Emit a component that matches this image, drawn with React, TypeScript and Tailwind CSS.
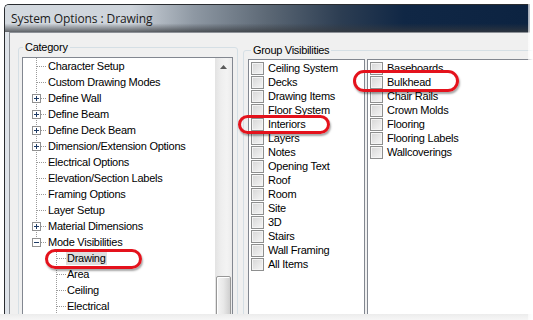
import React from "react";

const ui = { fontFamily: '"Liberation Sans", Arial, sans-serif' };

type Node = { label: string; box?: "plus" | "minus"; level: 0 | 1; last?: boolean; selected?: boolean };

const tree: Node[] = [
  { label: "Character Setup", level: 0 },
  { label: "Custom Drawing Modes", level: 0 },
  { label: "Define Wall", level: 0, box: "plus" },
  { label: "Define Beam", level: 0, box: "plus" },
  { label: "Define Deck Beam", level: 0, box: "plus" },
  { label: "Dimension/Extension Options", level: 0, box: "plus" },
  { label: "Electrical Options", level: 0 },
  { label: "Elevation/Section Labels", level: 0 },
  { label: "Framing Options", level: 0 },
  { label: "Layer Setup", level: 0 },
  { label: "Material Dimensions", level: 0, box: "plus" },
  { label: "Mode Visibilities", level: 0, box: "minus", last: true },
  { label: "Drawing", level: 1, selected: true },
  { label: "Area", level: 1 },
  { label: "Ceiling", level: 1 },
  { label: "Electrical", level: 1 },
];

const groupsA = [
  "Ceiling System",
  "Decks",
  "Drawing Items",
  "Floor System",
  "Interiors",
  "Layers",
  "Notes",
  "Opening Text",
  "Roof",
  "Room",
  "Site",
  "3D",
  "Stairs",
  "Wall Framing",
  "All Items",
];

const groupsB = ["Baseboards", "Bulkhead", "Chair Rails", "Crown Molds", "Flooring", "Flooring Labels", "Wallcoverings"];

function TreeLines({ node }: { node: Node }) {
  const dot = { stroke: "#9a9a9a", strokeDasharray: "1 1", shapeRendering: "crispEdges" as const };
  if (node.level === 1) {
    return (
      <svg width="44" height="16" className="shrink-0">
        <line x1="33.5" y1="0" x2="33.5" y2="16" {...dot} />
        <line x1="34" y1="8.5" x2="43" y2="8.5" {...dot} />
      </svg>
    );
  }
  return (
    <svg width="25" height="16" className="shrink-0">
      <line x1="13.5" y1="0" x2="13.5" y2={node.last ? 8 : 16} {...dot} />
      <line x1={node.box ? 18 : 14} y1="8.5" x2="23" y2="8.5" {...dot} />
      {node.box && (
        <g shapeRendering="crispEdges">
          <rect x="9.5" y="4.5" width="8" height="8" fill="#fff" stroke="#919191" />
          <line x1="11" y1="8.5" x2="16" y2="8.5" stroke="#1f3c66" />
          {node.box === "plus" && <line x1="13.5" y1="6" x2="13.5" y2="11" stroke="#1f3c66" />}
        </g>
      )}
    </svg>
  );
}

function Check() {
  return (
    <span className="block h-[13px] w-[13px] shrink-0 border border-[#8e8f8f] bg-[linear-gradient(135deg,#d6d6d6,#f6f6f6)] shadow-[inset_0_0_0_1px_#f4f4f4]" />
  );
}

function Oval({ cls }: { cls: string }) {
  return (
    <div
      className={
        "absolute rounded-full border-[3px] border-[#e4121c] shadow-[1px_2px_2px_rgba(0,0,0,0.35)] " + cls
      }
    />
  );
}

export default function App() {
  return (
    <div className="relative h-[320px] w-[533px] overflow-hidden bg-white text-[11px] text-black" style={ui}>
      <div className="ml-[4px] mt-[4px] flex h-[330px] w-[526px] flex-col rounded-tl-[5px] border-l border-t border-[#2a2d31] bg-[#dfe4ea]">
        {/* title bar */}
        <div className="flex h-[27px] shrink-0 items-center rounded-tl-[4px] bg-[linear-gradient(180deg,rgba(0,0,0,0)_68%,rgba(55,58,62,0.75)_100%),linear-gradient(90deg,#d4dae0_0%,#cdd3da_24%,#8e98a3_36%,#5c6875_50%,#2c3d52_64%,#102745_76%,#0c2341_100%)] pl-[6px]">
          <span className="text-[12px] tracking-[-0.1px] text-[#1a1a1a]" style={{ fontFamily: '"Open Sans", "Noto Sans", sans-serif' }}>
            System Options : Drawing
          </span>
        </div>

        {/* client area */}
        <div className="ml-[4px] flex flex-1 items-start border-l border-t border-[#8d9197] bg-[#f0f0f0] pl-[8px]">
          {/* Category */}
          <fieldset className="mt-[7px] h-[300px] w-[220px] shrink-0 rounded-[3px] border border-[#d5dfe5] pl-[3px] pr-[4px] pt-[3px]">
            <legend className="ml-[1px] px-[2px] leading-[14px] tracking-[-0.25px]">Category</legend>
            <div className="flex h-[280px] border border-[#828790] bg-white">
              <div className="flex flex-1 flex-col overflow-hidden tracking-[-0.25px]">
                {tree.map((n) => (
                  <div key={n.label} className="flex h-[16px] shrink-0 items-center leading-[16px]">
                    <TreeLines node={n} />
                    <span
                      className={
                        "whitespace-nowrap " +
                        (n.selected ? "ml-[-1px] bg-[#dedede] px-[1px] leading-[14px]" : "ml-[0px]")
                      }
                    >
                      {n.label}
                    </span>
                  </div>
                ))}
              </div>
              {/* scrollbar */}
              <div className="flex w-[17px] shrink-0 flex-col bg-[linear-gradient(90deg,#e3e3e3,#eeeeee_35%,#f3f3f3_70%,#ebebeb)]">
                <div className="flex h-[17px] shrink-0 items-center justify-center">
                  <svg width="7" height="4" viewBox="0 0 7 4">
                    <path d="M0 4 L3.5 0 L7 4 Z" fill="#5a5a5a" />
                  </svg>
                </div>
                <div className="h-[201px] shrink-0" />
                <div className="mx-[1px] flex-1 rounded-[2px] border border-[#979797] bg-[linear-gradient(90deg,#f4f4f4,#e8e8e8_50%,#cfcfcf)] shadow-[inset_1px_1px_0_#fff]" />
              </div>
            </div>
          </fieldset>

          {/* Group Visibilities */}
          <fieldset className="ml-[5px] mt-[10px] h-[300px] w-[320px] shrink-0 rounded-[3px] border border-[#d5dfe5] pl-[4px] pt-[2px]">
            <legend className="ml-[3px] px-[2px] leading-[14px] tracking-[-0.3px]">Group Visibilities</legend>
            <div className="flex h-[280px] gap-[2px]">
              <div className="flex w-[117px] shrink-0 flex-col border border-[#828790] bg-white pl-[2px] pt-[1px]">
                {groupsA.map((g) => (
                  <div key={g} className="flex h-[14px] items-center gap-[4px] leading-[14px] tracking-[-0.25px]">
                    <Check />
                    <span className="whitespace-nowrap">{g}</span>
                  </div>
                ))}
              </div>
              <div className="flex flex-1 flex-col border border-[#828790] bg-white pl-[2px] pt-[1px]">
                {groupsB.map((g) => (
                  <div key={g} className="flex h-[14px] items-center gap-[4px] leading-[14px] tracking-[-0.25px]">
                    <Check />
                    <span className="whitespace-nowrap">{g}</span>
                  </div>
                ))}
              </div>
            </div>
          </fieldset>
        </div>
      </div>

      {/* annotations */}
      <Oval cls="left-[45px] top-[249px] h-[20px] w-[97px]" />
      <Oval cls="left-[238px] top-[115px] h-[19px] w-[92px]" />
      <Oval cls="left-[353px] top-[70px] h-[22px] w-[106px]" />

      {/* faded screenshot edges */}
      <div className="absolute bottom-0 left-0 h-[6px] w-full bg-[linear-gradient(180deg,#ececec,#f6f6f6)]" />
      <div className="absolute right-0 top-0 h-full w-[5px] bg-[linear-gradient(90deg,rgba(255,255,255,0.6),#fff)]" />
    </div>
  );
}
